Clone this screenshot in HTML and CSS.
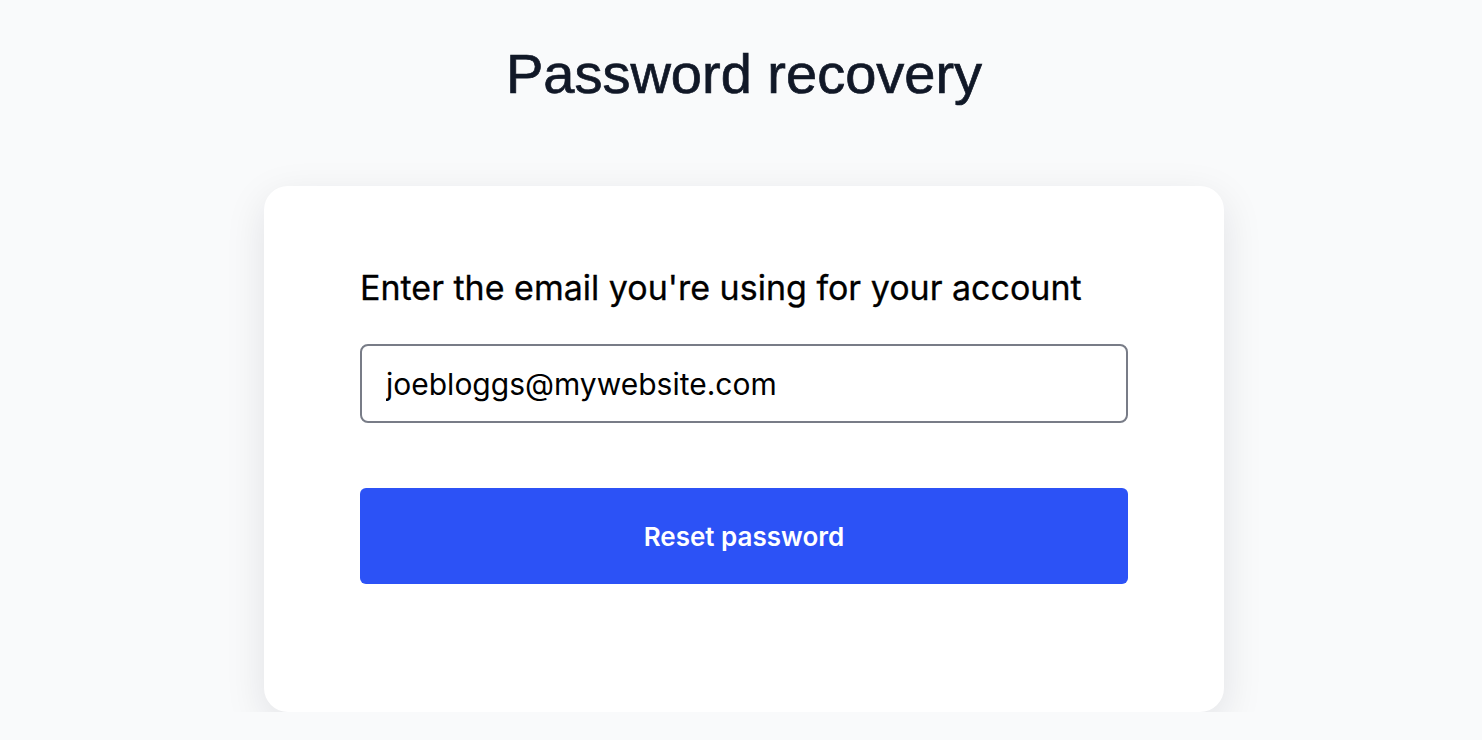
FILE: index.html
```html
<!DOCTYPE html>
<html lang="en">
<head>
  <meta charset="UTF-8">
  <title>Password recovery</title>
  <link rel="stylesheet" href="styles.css">
</head>
<body>

<h1 class="page-title">Password recovery</h1>

<div class="card">
  <form class="recovery-form" onsubmit="return false;">
    <label class="field-label" for="email">Enter the email you're using for your account</label>
    <input class="field-input" id="email" type="email" value="joebloggs@mywebsite.com">
    <button class="submit-button" type="submit">Reset password</button>
  </form>
</div>

</body>
</html>
```

FILE: styles.css
```css
body {
  margin: 0;
  padding-left: 6px;
  font-family: Inter, 'Liberation Sans', sans-serif;
  background: #f9fafb;
  color: #000;
}
.page-title {
  margin: 0;
  padding-top: 40px;
  text-align: center;
  font-family: 'Liberation Sans', Arial, sans-serif;
  font-size: 56px;
  font-weight: normal;
  line-height: 68px;
  color: #111827;
  -webkit-text-stroke: 0.7px #111827;
}
.card {
  width: 960px;
  box-sizing: border-box;
  margin: 78px auto 0;
  padding: 80px 96px 128px;
  background: #fff;
  border-radius: 24px;
  box-shadow: 0 12px 40px rgba(17, 24, 39, 0.1);
}
.recovery-form {
  display: flex;
  flex-direction: column;
}
.field-label {
  font-size: 34px;
  line-height: 44px;
  margin-bottom: 34px;
  -webkit-text-stroke: 0.3px #000;
}
.field-input {
  height: 79px;
  box-sizing: border-box;
  padding: 0 24px;
  border: 2px solid #787c87;
  border-radius: 8px;
  font-family: inherit;
  font-size: 30px;
  color: #000;
  outline: none;
}
.submit-button {
  margin-top: 65px;
  height: 96px;
  border: none;
  border-radius: 6px;
  background: #2c52f6;
  color: #fff;
  font-family: inherit;
  font-size: 26px;
  font-weight: 600;
  cursor: pointer;
}
```
